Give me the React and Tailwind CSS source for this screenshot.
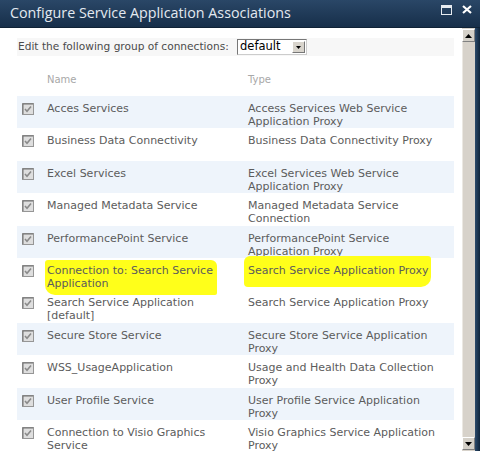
import React from 'react';

const rows = [
  { name: 'Acces Services', type: 'Access Services Web Service Application Proxy', shade: true },
  { name: 'Business Data Connectivity', type: 'Business Data Connectivity Proxy' },
  { name: 'Excel Services', type: 'Excel Services Web Service Application Proxy', shade: true },
  { name: 'Managed Metadata Service', type: 'Managed Metadata Service Connection' },
  { name: 'PerformancePoint Service', type: 'PerformancePoint Service Application Proxy', shade: true },
  { name: 'Connection to: Search Service Application', type: 'Search Service Application Proxy', marked: true },
  { name: 'Search Service Application [default]', type: 'Search Service Application Proxy' },
  { name: 'Secure Store Service', type: 'Secure Store Service Application Proxy', shade: true },
  { name: 'WSS_UsageApplication', type: 'Usage and Health Data Collection Proxy' },
  { name: 'User Profile Service', type: 'User Profile Service Application Proxy', shade: true },
  { name: 'Connection to Visio Graphics Service', type: 'Visio Graphics Service Application Proxy' },
];

const CheckBox = () => (
  <svg width="12" height="12" viewBox="0 0 12 12" className="block">
    <rect x="0.5" y="0.5" width="11" height="11" fill="#dedede" stroke="#969696" />
    <path d="M1 1h10" stroke="#707070" />
    <path d="M1 1v10" stroke="#707070" />
    <path d="M3 6l2 2.2L9 3.5" fill="none" stroke="#8a8a8a" strokeWidth="1.6" />
  </svg>
);

const Row = ({ name, type, shade, marked }) => (
  <div
    className={`grid grid-cols-[30px_201px_1fr] h-[32.4px] pt-[6px] text-[11px] leading-[13px] text-[#5c5c5c] ${
      shade ? 'bg-[#eef4fb]' : 'bg-white'
    }`}
  >
    <div className="pl-[5px] pt-[1px]">
      <CheckBox />
    </div>
    <div>
      {marked ? (
        <div className="-ml-[2px] -mt-[4px] w-[172px] h-[35px] pl-[2px] pt-[4px] bg-[#ffff1a] rounded-[3px_6px_2px_10px]">
          {name}
        </div>
      ) : (
        <div className="max-w-[190px]">{name}</div>
      )}
    </div>
    <div>
      {marked ? (
        <div className="-ml-[4px] -mt-[8px] w-[187px] h-[31px] pl-[4px] pt-[8px] bg-[#ffff1a] rounded-[6px_3px_10px_4px]">
          {type}
        </div>
      ) : (
        <div className="max-w-[196px]">{type}</div>
      )}
    </div>
  </div>
);

export default function App() {
  return (
    <div className="w-[480px] h-[451px] overflow-hidden flex flex-col bg-white font-['DejaVu_Sans',sans-serif]">
      <div className="h-[28px] flex items-center justify-between bg-gradient-to-b from-[#2a4767] to-[#172f4a] border-b border-[#0f2236] pl-[10px] pr-[8px]">
        <span className="font-['Open_Sans',sans-serif] text-[14.3px] text-[#e3e9f0] -mt-[1px]">
          Configure Service Application Associations
        </span>
        <div className="flex items-center gap-[10px] -mt-[8px]">
          <svg width="11" height="10" viewBox="0 0 11 10">
            <rect x="0.5" y="0.5" width="10" height="9" fill="none" stroke="#e6ebf0" />
            <rect x="1" y="1" width="9" height="2" fill="#e6ebf0" />
          </svg>
          <svg width="10" height="9" viewBox="0 0 10 9">
            <path d="M1 1l8 7M9 1L1 8" stroke="#ffffff" strokeWidth="2.2" />
          </svg>
        </div>
      </div>

      <div className="flex-1 flex min-h-0">
        <div className="flex-1 pl-[17px] pr-[8px] pt-[10px]">
          <div className="h-[18px] flex items-center bg-[#f7f7f7] text-[10.6px] text-[#4a4a4a]">
            <span className="w-[220px] pl-[1px] whitespace-nowrap">
              Edit the following group of connections:
            </span>
            <div className="flex items-center w-[70px] h-[16px] border border-t-[#777] border-l-[#777] border-b-[#ccc] border-r-[#ccc] bg-white pl-[2px] text-black">
              <span className="flex-1 text-[11.5px] leading-none">default</span>
              <div className="w-[13px] h-[12px] mr-[1px] bg-[#d8d4cc] border border-t-white border-l-white border-b-[#777] border-r-[#777] flex items-center justify-center">
                <svg width="5" height="3" viewBox="0 0 5 3">
                  <path d="M0 0h5L2.5 3z" fill="#000" />
                </svg>
              </div>
            </div>
          </div>

          <div className="grid grid-cols-[30px_201px_1fr] h-[40px] pt-[16px] text-[10px] text-[#a8a8a8]">
            <span />
            <span>Name</span>
            <span>Type</span>
          </div>

          {rows.map((r) => (
            <Row key={r.name} {...r} />
          ))}
        </div>

        <div className="w-[13px] flex flex-col bg-[#d7d2ca]">
          <div className="h-[13px] mt-[1px] bg-[#d4d0c8] border border-t-white border-l-white border-b-[#808080] border-r-[#808080] flex items-center justify-center">
            <svg width="7" height="4" viewBox="0 0 7 4">
              <path d="M3.5 0L7 4H0z" fill="#000" />
            </svg>
          </div>
          <div className="flex-1 border-l border-[#ebe8e2]" />
          <div className="h-[13px] mb-[1px] bg-[#d4d0c8] border border-t-white border-l-white border-b-[#808080] border-r-[#808080] flex items-center justify-center">
            <svg width="7" height="4" viewBox="0 0 7 4">
              <path d="M0 0h7L3.5 4z" fill="#000" />
            </svg>
          </div>
        </div>
        <div className="w-[5px] bg-gradient-to-r from-[#2b4a6b] to-[#10253b]" />
      </div>
    </div>
  );
}
